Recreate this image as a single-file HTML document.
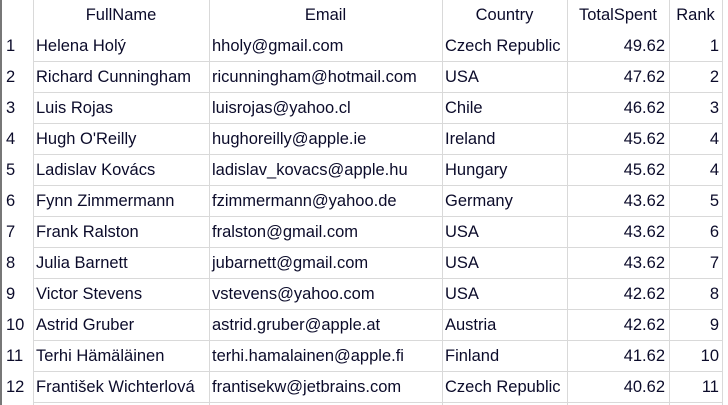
<!DOCTYPE html><html><head><style>
body{margin:0;width:728px;height:405px;background:#fff;overflow:hidden;font-family:"Liberation Sans",sans-serif;font-size:16.5px;color:#0b0b2a;position:relative}
.l{position:absolute;left:0;top:0;width:2px;height:405px;background:#777}
.v{position:absolute;top:0;width:1px;height:405px;background:#d9d9d9}
.h{position:absolute;left:33px;width:690px;height:1px;background:#d9d9d9}
.c{position:absolute;height:31px;line-height:31px;white-space:nowrap}
</style></head><body>
<div class="l"></div>
<div class="v" style="left:33px"></div><div class="v" style="left:209px"></div><div class="v" style="left:442px"></div><div class="v" style="left:567px"></div><div class="v" style="left:669px"></div><div class="v" style="left:722px"></div>
<div id="g"></div>
<script>
var d=[["Helena Holý","hholy@gmail.com","Czech Republic","49.62",1],["Richard Cunningham","ricunningham@hotmail.com","USA","47.62",2],["Luis Rojas","luisrojas@yahoo.cl","Chile","46.62",3],["Hugh O'Reilly","hughoreilly@apple.ie","Ireland","45.62",4],["Ladislav Kovács","ladislav_kovacs@apple.hu","Hungary","45.62",4],["Fynn Zimmermann","fzimmermann@yahoo.de","Germany","43.62",5],["Frank Ralston","fralston@gmail.com","USA","43.62",6],["Julia Barnett","jubarnett@gmail.com","USA","43.62",7],["Victor Stevens","vstevens@yahoo.com","USA","42.62",8],["Astrid Gruber","astrid.gruber@apple.at","Austria","42.62",9],["Terhi Hämäläinen","terhi.hamalainen@apple.fi","Finland","41.62",10],["František Wichterlová","frantisekw@jetbrains.com","Czech Republic","40.62",11]];
var h='';
h+='<div class="c" style="left:33px;width:176px;text-align:center;top:0">FullName</div><div class="c" style="left:209px;width:233px;text-align:center;top:0">Email</div><div class="c" style="left:442px;width:125px;text-align:center;top:0">Country</div><div class="c" style="left:567px;width:102px;text-align:center;top:0">TotalSpent</div><div class="c" style="left:669px;width:53px;text-align:center;top:0">Rank</div>';
d.forEach(function(r,i){var t=31+i*31;
h+='<div class="h" style="top:'+(t+30)+'px"></div>';
h+='<div class="c" style="left:6px;top:'+t+'px">'+(i+1)+'</div>';
h+='<div class="c" style="left:36px;top:'+t+'px">'+r[0]+'</div>';
h+='<div class="c" style="left:212px;top:'+t+'px">'+r[1]+'</div>';
h+='<div class="c" style="left:445px;top:'+t+'px">'+r[2]+'</div>';
h+='<div class="c" style="left:567px;width:98px;text-align:right;top:'+t+'px">'+r[3]+'</div>';
h+='<div class="c" style="left:669px;width:50px;text-align:right;top:'+t+'px">'+r[4]+'</div>';});
document.getElementById('g').innerHTML=h;
</script>
</body></html>
